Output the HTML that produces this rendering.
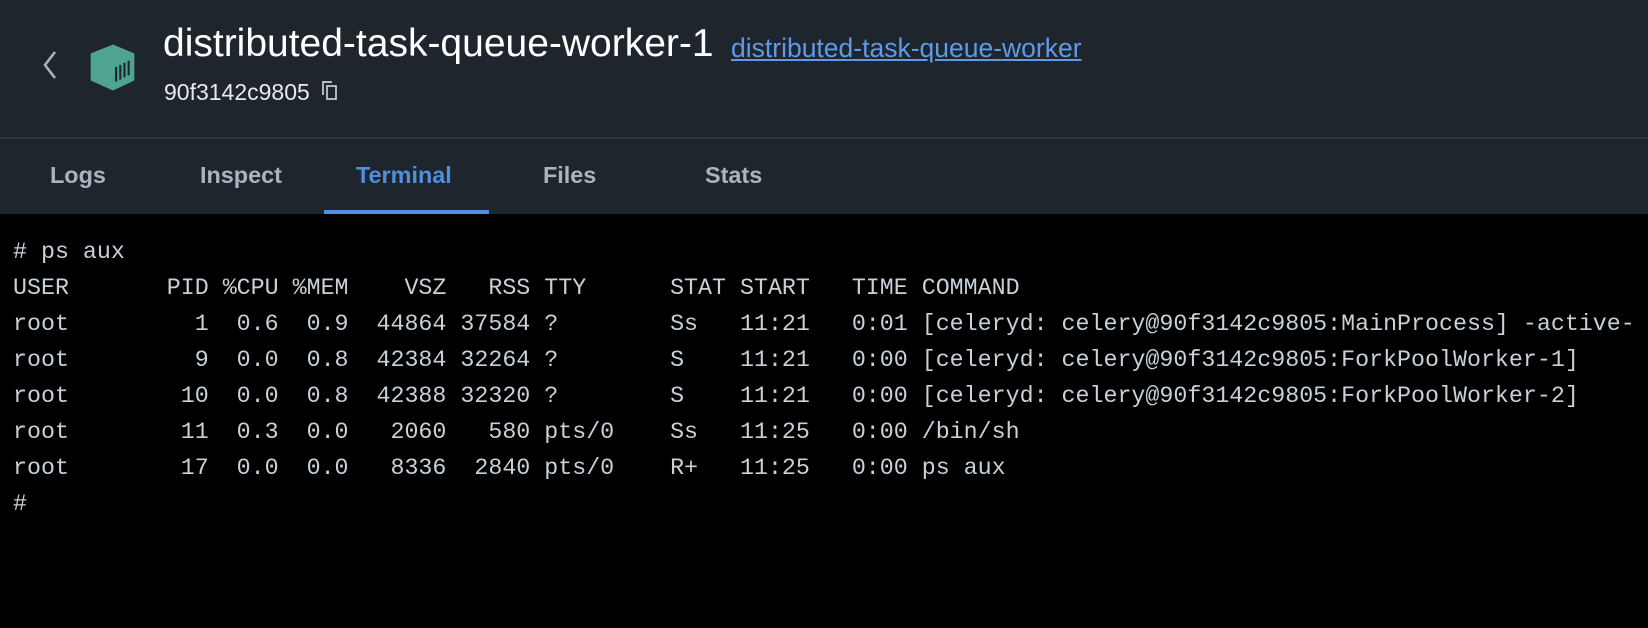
<!DOCTYPE html>
<html><head><style>
body{margin:0;width:1648px;height:628px;background:#000;overflow:hidden;font-family:"Liberation Sans",sans-serif}
.top{position:absolute;left:0;top:0;width:1648px;height:137px;background:#1f252c;border-bottom:2px solid #2e353d}
.tabs{position:absolute;left:0;top:139px;width:1648px;height:75px;background:#1f252c}
.tab{position:absolute;top:23px;font-size:23.4px;font-weight:bold;color:#aab4c0}
.title{position:absolute;left:163px;top:22px;font-size:39px;color:#fff}
.link{position:absolute;left:731px;top:33px;font-size:26.5px;color:#5e9ae8;text-decoration:underline}
.id{position:absolute;left:164px;top:79px;font-size:23px;color:#e6eaee}
pre{position:absolute;left:13px;top:234px;margin:0;font-family:"Liberation Mono",monospace;font-size:23.3px;line-height:36px;color:#c8d0d8}
</style></head><body>
<div class="top">
<svg style="position:absolute;left:38px;top:48px" width="24" height="34"><path d="M17 4 L7 17 L17 30" stroke="#a8b2bc" stroke-width="2.6" fill="none"/></svg>
<svg style="position:absolute;left:88px;top:42px" width="50" height="50" viewBox="0 0 48 48"><path d="M24 4 L43 12 L43 36 L24 45 L4 36 L4 12 Z" fill="#4fa391" stroke="#4fa391" stroke-linejoin="round" stroke-width="3"/><g stroke="#1f252c" stroke-width="2"><line x1="27" y1="24" x2="27" y2="38"/><line x1="31" y1="22" x2="31" y2="36"/><line x1="35" y1="20" x2="35" y2="34"/><line x1="39" y1="18" x2="39" y2="32"/></g></svg>
<div class="title">distributed-task-queue-worker-1</div>
<div class="link">distributed-task-queue-worker</div>
<div class="id">90f3142c9805</div>
<svg style="position:absolute;left:320px;top:80px" width="22" height="22"><path d="M3 15 V2 H12" stroke="#c8d0d8" stroke-width="1.7" fill="none"/><rect x="7" y="6" width="9" height="13" stroke="#c8d0d8" stroke-width="1.7" fill="none"/></svg>
</div>
<div class="tabs">
<div class="tab" style="left:50px">Logs</div>
<div class="tab" style="left:200px">Inspect</div>
<div class="tab" style="left:356px;color:#4e8fe2">Terminal</div>
<div class="tab" style="left:543px">Files</div>
<div class="tab" style="left:705px">Stats</div>
<div style="position:absolute;left:324px;top:71px;width:165px;height:4px;background:#4e8fe2"></div>
</div>
<pre># ps aux
USER       PID %CPU %MEM    VSZ   RSS TTY      STAT START   TIME COMMAND
root         1  0.6  0.9  44864 37584 ?        Ss   11:21   0:01 [celeryd: celery@90f3142c9805:MainProcess] -active-
root         9  0.0  0.8  42384 32264 ?        S    11:21   0:00 [celeryd: celery@90f3142c9805:ForkPoolWorker-1]
root        10  0.0  0.8  42388 32320 ?        S    11:21   0:00 [celeryd: celery@90f3142c9805:ForkPoolWorker-2]
root        11  0.3  0.0   2060   580 pts/0    Ss   11:25   0:00 /bin/sh
root        17  0.0  0.0   8336  2840 pts/0    R+   11:25   0:00 ps aux
#</pre>
</body></html>
